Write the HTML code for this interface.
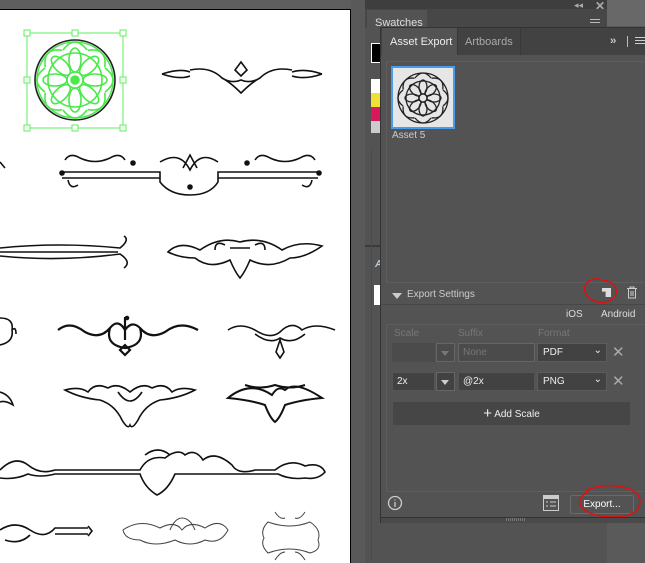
<!DOCTYPE html>
<html><head><style>
*{margin:0;padding:0;box-sizing:border-box}
body{width:645px;height:563px;overflow:hidden;background:#535353;position:relative;font-family:"Liberation Sans",sans-serif;font-size:11px;color:#ddd}
.a{position:absolute}
</style></head><body>
<div class="a" style="left:0;top:0;width:352px;height:9px;background:#5e5e5e"></div>
<div class="a" style="left:0;top:9px;width:351px;height:554px;background:#fff;border-top:1px solid #000;border-right:1px solid #000"></div>
<div class="a" style="left:351px;top:0;width:14px;height:563px;background:#595959"></div>
<svg class="a" style="left:0;top:10px" width="350" height="553" viewBox="0 10 350 553" fill="none" stroke="#111" stroke-width="1.6">
 <g transform="translate(75,80)" stroke="#4be84b">
  <circle r="40" stroke="#222"/><circle r="38"/>
  <circle r="8"/><circle r="4" fill="#4be84b"/>
  <g id="p"><ellipse cx="0" cy="-20" rx="6" ry="12"/><path d="M-12 -30 Q0 -46 12 -30"/></g>
  <use href="#p" transform="rotate(45)"/><use href="#p" transform="rotate(90)"/><use href="#p" transform="rotate(135)"/>
  <use href="#p" transform="rotate(180)"/><use href="#p" transform="rotate(225)"/><use href="#p" transform="rotate(270)"/><use href="#p" transform="rotate(315)"/>
  <circle r="27"/>
 </g>
 <g stroke="#5ef05e" stroke-width="1"><rect x="27" y="33" width="96" height="95"/>
  <g fill="#fff"><rect x="24" y="30" width="6" height="6"/><rect x="72" y="30" width="6" height="6"/><rect x="120" y="30" width="6" height="6"/><rect x="24" y="77" width="6" height="6"/><rect x="120" y="77" width="6" height="6"/><rect x="24" y="125" width="6" height="6"/><rect x="72" y="125" width="6" height="6"/><rect x="120" y="125" width="6" height="6"/></g></g>
 <path d="M162 74 Q180 68 190 72 M190 70 Q210 66 222 78 Q230 82 241 93 Q252 82 260 78 Q272 66 292 70 M292 72 Q305 68 322 74 M162 74 Q180 80 190 76 M292 76 Q305 80 322 74 M222 78 Q232 84 241 80 Q250 84 260 78 M241 62 L235 70 L241 76 L247 70 Z"/>
 <path d="M62 172 H160 V182 Q170 195 190 195 Q210 195 218 182 V172 H318 M62 178 H160 M218 178 H318 M160 162 Q180 150 190 170 Q200 150 218 162 M183 168 L190 155 L197 168 M65 160 Q70 152 80 158 Q95 165 110 158 Q120 152 125 160 M315 160 Q310 152 300 158 Q285 165 270 158 Q260 152 255 160 M68 180 Q70 190 78 185 M312 180 Q310 190 302 185"/>
 <circle cx="62" cy="173" r="2" fill="#111"/><circle cx="319" cy="173" r="2" fill="#111"/><circle cx="133" cy="163" r="2" fill="#111"/><circle cx="247" cy="163" r="2" fill="#111"/><circle cx="190" cy="187" r="2" fill="#111"/>
 <path d="M0 162 L5 168"/>
 <path d="M0 248 Q60 242 120 248 Q130 240 124 236 M0 256 Q60 262 120 254 Q132 262 124 268 M0 252 H118"/>
 <path d="M168 252 Q180 240 200 250 Q220 236 240 242 Q262 236 282 250 Q300 240 322 246 Q305 258 290 258 Q270 270 250 260 Q245 272 240 278 Q235 272 230 260 Q210 270 195 258 Q180 258 168 252 Z M230 248 H250 M215 250 Q215 240 225 245 M265 250 Q265 240 255 245"/>
 <path d="M0 318 Q14 318 12 330 Q14 342 0 345 M12 330 Q16 326 16 334"/>
 <path d="M58 330 Q70 320 85 332 Q100 340 110 328 Q118 318 125 330 Q132 320 140 328 Q150 340 165 332 Q180 320 198 330 M110 328 Q105 345 125 348 Q145 345 140 328 M125 317 L125 340 M125 345 L120 350 L125 355 L130 350 Z" stroke-width="2.2"/>
 <circle cx="127" cy="318" r="1.5" fill="#111"/>
 <path d="M228 330 Q240 322 255 330 Q270 340 280 332 Q292 320 302 330 Q315 322 335 330 M255 334 Q270 345 280 338 Q292 345 305 334 M280 340 L276 352 L280 358 L284 352 Z"/>
 <path d="M0 392 Q10 395 13 405 Q5 400 0 402"/>
 <path d="M65 390 Q80 386 88 392 Q95 382 108 388 Q118 382 130 392 Q142 382 152 388 Q165 382 172 392 Q180 386 195 390 Q180 398 160 400 Q145 405 138 420 Q132 430 130 425 Q128 430 122 420 Q115 405 100 400 Q80 398 65 390 Z M118 392 Q130 410 142 392"/>
 <path d="M228 398 Q250 380 272 395 Q278 385 285 390 Q295 380 322 398 Q300 400 285 405 Q280 418 275 422 Q270 418 265 405 Q250 400 228 398 Z M245 385 Q260 390 275 385 Q290 390 305 385" stroke-width="2"/>
 <path d="M0 470 Q15 455 28 465 Q40 475 55 470 H140 Q148 455 165 458 Q178 448 185 455 Q195 448 203 460 Q215 450 232 465 Q238 475 255 470 H275 Q290 458 305 466 Q320 462 325 472 Q318 480 305 478 Q290 480 278 474 H175 Q168 490 157 495 Q145 488 140 474 H55 Q40 478 28 474 Q15 480 0 478 M145 455 Q158 445 170 455"/>
 <path d="M0 530 Q15 520 30 530 Q45 540 55 528 H88 M55 534 H88 M88 526 L92 531 L88 536 M5 540 Q20 545 30 535"/>
 <path d="M123 530 Q140 518 160 528 Q175 520 182 530 Q190 520 205 528 Q220 518 228 530 Q220 545 205 540 Q190 548 175 540 Q155 548 140 540 Q125 540 123 530 Z M170 530 Q175 518 182 518 Q190 518 195 530" stroke="#444" stroke-width="1"/>
 <path d="M268 522 Q290 530 310 522 Q322 530 318 540 Q322 550 310 553 Q290 545 268 553 Q260 545 264 538 Q260 530 268 522 Z M275 512 Q280 520 285 518 M305 512 Q300 520 295 518 M275 560 Q280 552 285 552 M305 560 Q300 552 295 552" stroke="#444" stroke-width="1"/>
</svg>
<div class="a" style="left:365px;top:0;width:242px;height:9px;background:#3e3e3e"></div>
<div class="a" style="left:574px;top:0;color:#aaa;font-size:9px">◂◂</div>
<div class="a" style="left:595px;top:-1px;color:#aaa;font-size:12px;font-weight:bold">✕</div>
<div class="a" style="left:365px;top:9px;width:242px;height:19px;background:#474747"></div>
<div class="a" style="left:367px;top:10px;width:60px;height:18px;background:#535353"></div>
<div class="a" style="left:375px;top:17px;font-size:11px;color:#ddd">Swatches</div>
<div class="a" style="left:590px;top:19px;width:10px;height:1px;background:#bbb;box-shadow:0 3px #bbb"></div>
<div class="a" style="left:607px;top:0;width:38px;height:26px;background:#686868"></div>
<div class="a" style="left:607px;top:26px;width:38px;height:537px;background:#5a5a5a"></div>
<div class="a" style="left:371px;top:43px;width:10px;height:20px;background:#000;border:1px solid #fff"></div>
<div class="a" style="left:371px;top:79px;width:10px;height:14px;background:#fff"></div>
<div class="a" style="left:371px;top:93px;width:10px;height:14px;background:#eee236"></div>
<div class="a" style="left:371px;top:107px;width:10px;height:14px;background:#d8175c"></div>
<div class="a" style="left:371px;top:121px;width:10px;height:12px;background:#ccc"></div>
<div class="a" style="left:365px;top:245px;width:16px;height:2px;background:#3a3a3a"></div>
<div class="a" style="left:375px;top:259px;font-size:10px;color:#bcd;font-style:italic;font-weight:bold">A</div>
<div class="a" style="left:374px;top:285px;width:7px;height:20px;background:#fff"></div>
<div class="a" style="left:371px;top:150px;width:1px;height:410px;background:#4a4a4a"></div>
<div class="a" style="left:380px;top:27px;width:265px;height:496px;background:#535353;border:1px solid #333;border-right:none"></div>
<div class="a" style="left:381px;top:28px;width:264px;height:27px;background:#424242"></div>
<div class="a" style="left:382px;top:28px;width:75px;height:27px;background:#535353"></div>
<div class="a" style="left:390px;top:36px;color:#eee;font-size:11px">Asset Export</div>
<div class="a" style="left:457px;top:28px;width:1px;height:27px;background:#383838"></div>
<div class="a" style="left:465px;top:36px;color:#aaa;font-size:11px">Artboards</div>
<div class="a" style="left:520px;top:28px;width:1px;height:27px;background:#383838"></div>
<div class="a" style="left:610px;top:35px;color:#ccc;font-size:11px;font-weight:bold;letter-spacing:-1px">››</div>
<div class="a" style="left:627px;top:36px;width:1px;height:11px;background:#bbb"></div>
<div class="a" style="left:635px;top:37px;width:10px;height:1px;background:#ccc;box-shadow:0 3px #ccc,0 6px #ccc"></div>
<div class="a" style="left:386px;top:61px;width:259px;height:222px;border:1px solid #5e5e5e;border-right:none;border-radius:2px"></div>
<div class="a" style="left:391px;top:66px;width:64px;height:63px;border:2px solid #4a9be8;background:#e6e6e6"></div>
<svg class="a" style="left:393px;top:68px" width="60" height="59" viewBox="-30 -30 60 59" fill="none" stroke="#222" stroke-width="1.3">
 <circle r="25"/><circle r="4"/><circle r="17"/>
 <g id="q"><ellipse cx="0" cy="-11" rx="4" ry="7"/><path d="M-8 -20 Q0 -30 8 -20"/></g>
 <use href="#q" transform="rotate(45)"/><use href="#q" transform="rotate(90)"/><use href="#q" transform="rotate(135)"/><use href="#q" transform="rotate(180)"/><use href="#q" transform="rotate(225)"/><use href="#q" transform="rotate(270)"/><use href="#q" transform="rotate(315)"/>
</svg>
<div class="a" style="left:392px;top:130px;color:#ccc;font-size:10px">Asset 5</div>
<div class="a" style="left:392px;top:293px;width:0;height:0;border-left:5px solid transparent;border-right:5px solid transparent;border-top:6px solid #ccc"></div>
<div class="a" style="left:407px;top:289px;color:#ccc;font-size:10px">Export Settings</div>
<div class="a" style="left:602px;top:288px;width:9px;height:9px;background:#ddd;clip-path:polygon(0 0,100% 0,100% 100%,40% 100%,40% 40%,0 40%)"></div>
<svg class="a" style="left:626px;top:286px" width="12" height="13" fill="none" stroke="#ccc" stroke-width="1"><path d="M1 2.5H11M4 2.5V1H8V2.5M2.5 3V12H9.5V3M5 5V10M7 5V10"/></svg>
<svg class="a" style="left:580px;top:276px" width="40" height="30" fill="none" stroke="#e01010" stroke-width="1.5"><path d="M20 3 Q8 2 5 10 Q3 22 18 26 Q32 28 36 18 Q38 6 22 4"/></svg>
<div class="a" style="left:381px;top:304px;width:264px;height:1px;background:#474747"></div>
<div class="a" style="left:566px;top:309px;color:#ddd;font-size:10px">iOS</div>
<div class="a" style="left:601px;top:309px;color:#ddd;font-size:10px">Android</div>
<div class="a" style="left:386px;top:324px;width:259px;height:168px;border:1px solid #5e5e5e;border-right:none;border-radius:2px"></div>
<div class="a" style="left:394px;top:328px;color:#777;font-size:10px">Scale</div>
<div class="a" style="left:458px;top:328px;color:#777;font-size:10px">Suffix</div>
<div class="a" style="left:538px;top:328px;color:#777;font-size:10px">Format</div>
<div class="a" style="left:392px;top:343px;width:43px;height:19px;background:#4b4b4b"></div>
<div class="a" style="left:436px;top:343px;width:19px;height:19px;border:1px solid #666;background:#4b4b4b"></div>
<div class="a" style="left:441px;top:351px;border-left:4px solid transparent;border-right:4px solid transparent;border-top:5px solid #777"></div>
<div class="a" style="left:458px;top:343px;width:77px;height:19px;border:1px solid #666;background:#4b4b4b;color:#777;padding:3px 4px;font-size:10px">None</div>
<div class="a" style="left:537px;top:343px;width:70px;height:19px;border:1px solid #5c5c5c;background:#424242;color:#eee;padding:3px 5px;font-size:10px">PDF<span style="position:absolute;right:4px;top:1px;font-size:10px">⌄</span></div>
<div class="a" style="left:612px;top:343px;color:#aaa;font-size:15px">✕</div>
<div class="a" style="left:392px;top:372px;width:43px;height:19px;border:1px solid #555;background:#424242;color:#eee;padding:3px 4px;font-size:10px">2x</div>
<div class="a" style="left:436px;top:372px;width:19px;height:19px;border:1px solid #666;background:#424242"></div>
<div class="a" style="left:441px;top:380px;border-left:4px solid transparent;border-right:4px solid transparent;border-top:5px solid #ccc"></div>
<div class="a" style="left:458px;top:372px;width:77px;height:19px;border:1px solid #555;background:#424242;color:#eee;padding:3px 4px;font-size:10px">@2x</div>
<div class="a" style="left:537px;top:372px;width:70px;height:19px;border:1px solid #5c5c5c;background:#424242;color:#eee;padding:3px 5px;font-size:10px">PNG<span style="position:absolute;right:4px;top:1px;font-size:10px">⌄</span></div>
<div class="a" style="left:612px;top:372px;color:#aaa;font-size:15px">✕</div>
<div class="a" style="left:393px;top:402px;width:237px;height:23px;background:#464646;color:#eee;font-size:10px;text-align:center;line-height:23px"><span style="font-size:15px;vertical-align:-1px">+</span> Add Scale</div>
<svg class="a" style="left:387px;top:495px" width="16" height="16" fill="none" stroke="#ccc" stroke-width="1.3"><circle cx="8" cy="8" r="6.5"/><path d="M8 7V12M8 4.5V5.5"/></svg>
<svg class="a" style="left:543px;top:495px" width="17" height="16"><rect x="0.5" y="0.5" width="15" height="15" fill="none" stroke="#ccc"/><rect x="0" y="0" width="16" height="4" fill="#ccc"/><path d="M3 7H5M7 7H13M3 11H5M7 11H13" stroke="#ccc"/></svg>
<div class="a" style="left:570px;top:495px;width:64px;height:19px;border:1px solid #6a6a6a;border-radius:2px;color:#fff;font-size:10px;text-align:center;line-height:17px">Export...</div>
<svg class="a" style="left:575px;top:483px" width="70" height="40" fill="none" stroke="#e01010" stroke-width="1.5"><path d="M10 8 Q30 -2 55 6 Q68 12 64 24 Q58 35 35 34 Q12 33 5 22 Q3 14 14 8"/></svg>
<div class="a" style="left:381px;top:517px;width:264px;height:6px;background:#4a4a4a;border-top:1px solid #333"></div>
<div class="a" style="left:506px;top:518px;width:20px;height:3px;background:repeating-linear-gradient(90deg,#777 0 1px,transparent 1px 2px)"></div>
</body></html>
